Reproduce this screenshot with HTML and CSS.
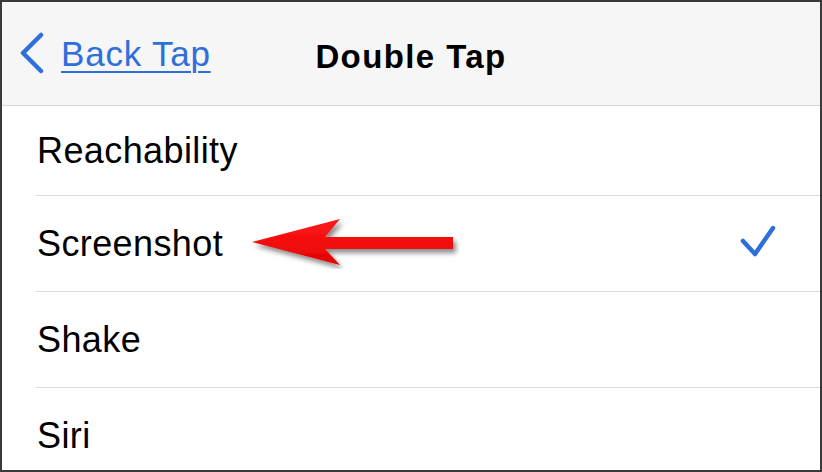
FILE: index.html
```html
<!DOCTYPE html>
<html lang="en">
<head>
  <meta charset="UTF-8" />
  <title>Double Tap</title>
  <link rel="stylesheet" href="styles.css">
</head>
<body>

<div class="screen">
  <div class="nav-bar">
    <a class="back-link" href="#">
      <svg class="chevron" width="30" height="44" viewBox="0 0 30 44">
        <polyline points="22,3 4,21 22,39" fill="none" stroke="#2f6fdc" stroke-width="4.5" stroke-linecap="round" stroke-linejoin="round" />
      </svg>
      <span class="back-text">Back Tap</span>
    </a>
    <h1 class="nav-title">Double Tap</h1>
  </div>

  <ul class="option-list">
    <li class="option-row"><span class="option-label">Reachability</span></li>
    <li class="option-row">
      <span class="option-label">Screenshot</span>
      <svg class="check" width="40" height="34" viewBox="0 0 40 34">
        <polyline points="5,16 17,29 35,3" fill="none" stroke="#2f6fdc" stroke-width="4.5" stroke-linecap="round" stroke-linejoin="round" />
      </svg>
    </li>
    <li class="option-row"><span class="option-label">Shake</span></li>
    <li class="option-row"><span class="option-label">Siri</span></li>
  </ul>

  <!-- red callout arrow pointing at Screenshot -->
  <svg class="callout-arrow" width="220" height="60" viewBox="0 0 220 60">
    <defs>
      <filter id="arrow-shadow" x="-10%" y="-30%" width="130%" height="180%">
        <feDropShadow dx="3" dy="4" stdDeviation="2.5" flood-color="#000" flood-opacity="0.45" />
      </filter>
      <linearGradient id="arrow-fill" x1="0" y1="0" x2="0" y2="1">
        <stop offset="0" stop-color="#ff1a1a" />
        <stop offset="1" stop-color="#e60000" />
      </linearGradient>
    </defs>
    <polygon filter="url(#arrow-shadow)" fill="url(#arrow-fill)"
      points="10,33 98,10 83,28 211,28 211,40 83,40 98,56" />
  </svg>
</div>

</body>
</html>
```

FILE: styles.css
```css
* {
  box-sizing: border-box;
}

body {
  margin: 0;
  background: #fff;
  font-family: "Liberation Sans", Arial, sans-serif;
  color: #000;
}

.screen {
  position: relative;
  width: 822px;
  height: 472px;
  border: 2px solid #3a3a3a;
  overflow: hidden;
  background: #fff;
}

.nav-bar {
  position: relative;
  height: 104px;
  background: #f6f6f6;
  border-bottom: 1px solid #d6d6d6;
  display: flex;
  align-items: center;
}

.back-link {
  display: flex;
  align-items: center;
  gap: 12px;
  padding-left: 17px;
  margin-top: 0;
  color: #2f6fdc;
  text-decoration: none;
}

.back-text {
  font-size: 35px;
  letter-spacing: 0.8px;
  text-decoration: underline;
  text-decoration-thickness: 2px;
  text-underline-offset: 5px;
}

.nav-title {
  position: absolute;
  left: 0;
  right: 0;
  top: 35px;
  margin: 0;
  text-align: center;
  font-size: 33px;
  font-weight: bold;
  letter-spacing: 1.4px;
  line-height: 40px;
}

.option-list {
  list-style: none;
  margin: 0;
  padding: 0 0 0 34px;
}

.option-row {
  height: 96px;
  border-top: 1px solid #dcdcdc;
  display: flex;
  align-items: center;
  justify-content: space-between;
  padding-right: 42px;
}

.option-row:first-child {
  height: 89px;
  border-top: none;
}

.option-label {
  padding-left: 1px;
  font-size: 36px;
  letter-spacing: 0.4px;
}

.check {
  margin-top: -3px;
}

.callout-arrow {
  position: absolute;
  left: 240px;
  top: 207px;
}
```
